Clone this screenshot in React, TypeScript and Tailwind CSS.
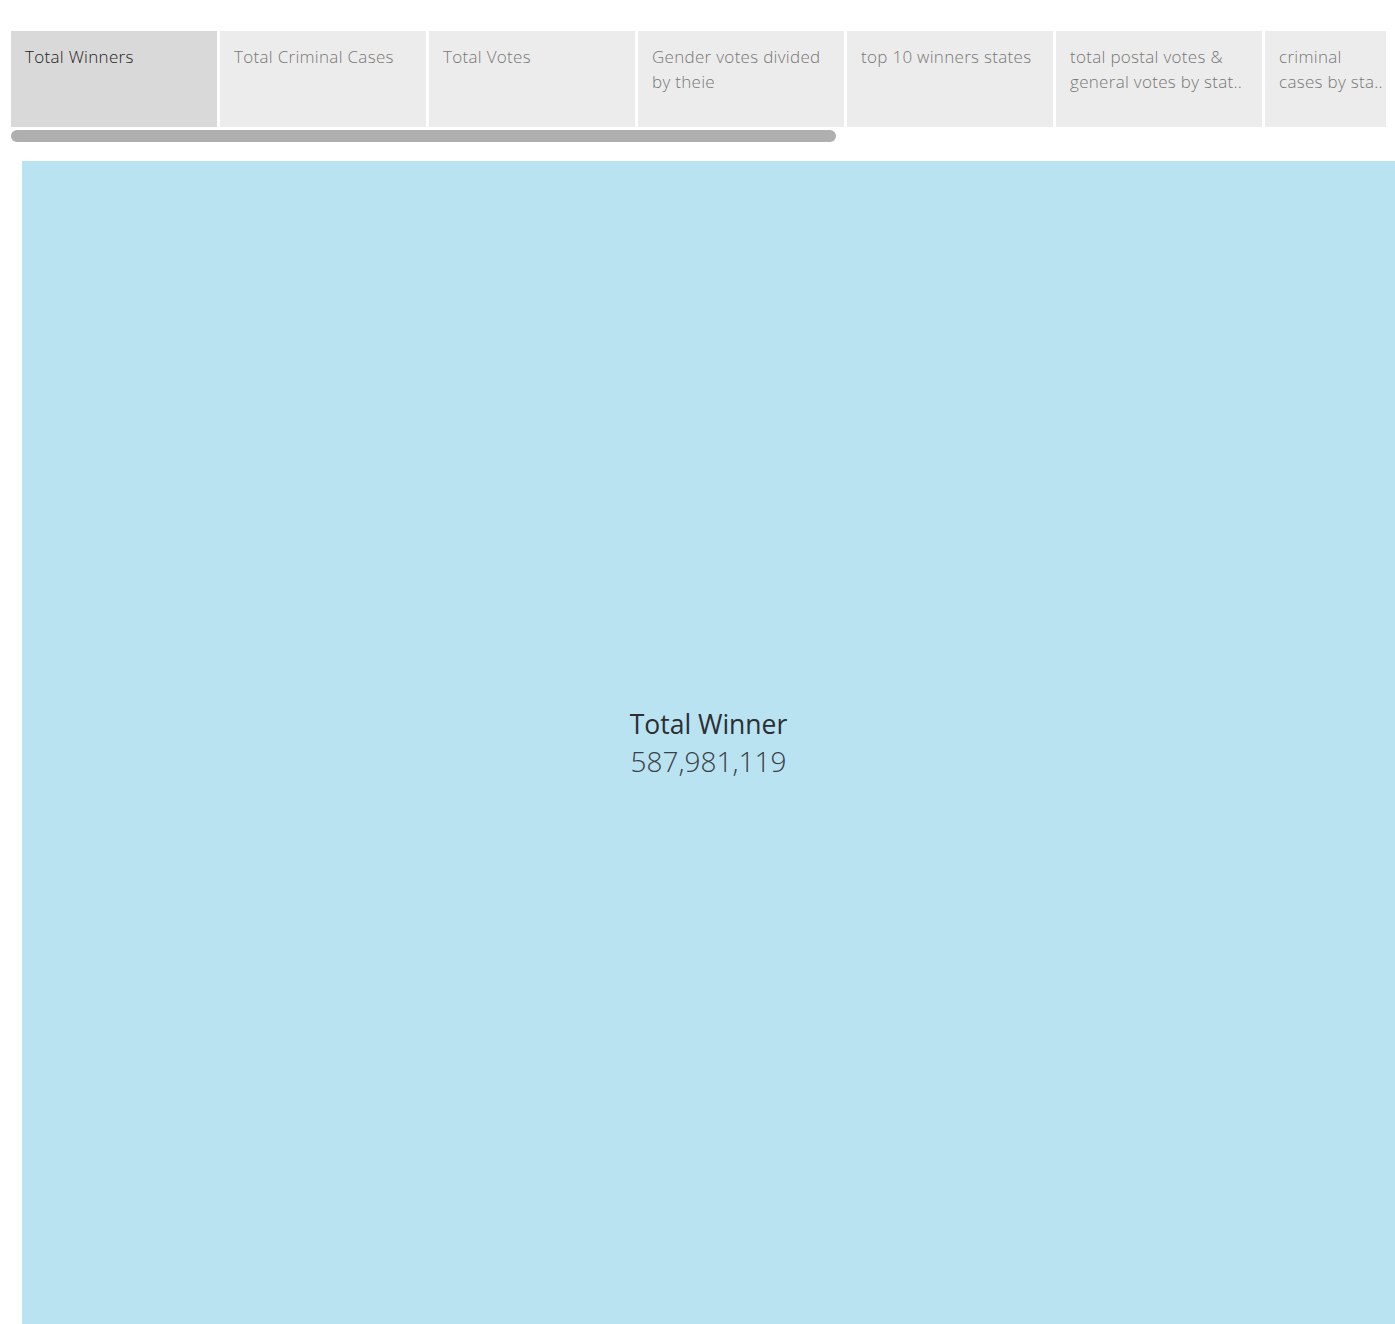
const tabs = [
  { label: "Total Winners", active: true },
  { label: "Total Criminal Cases" },
  { label: "Total Votes" },
  { label: "Gender votes divided by theie" },
  { label: "top 10 winners states" },
  { label: "total postal votes & general votes by stat.." },
  { label: "criminal cases by sta..", narrow: true },
];

export default function App() {
  return (
    <div className="flex h-[1324px] w-[1395px] flex-col overflow-hidden bg-white font-['Open_Sans',sans-serif]">
      <div className="ml-[11px] mt-[31px] w-[1375px] overflow-hidden">
        <div className="flex gap-[3px]">
          {tabs.map((t) => (
            <div
              key={t.label}
              className={
                "h-[96px] w-[206px] shrink-0 px-[14px] pt-[13px] text-[17px] font-light leading-[25px] tracking-[0.3px] " +
                (t.active ? "bg-[#d9d9d9] text-[#222]" : "bg-[#ececec] text-[#777]")
              }
            >
              <p className={t.narrow ? "w-[108px]" : "w-[178px]"}>{t.label}</p>
            </div>
          ))}
        </div>
        <div className="mt-[3px] h-[12px] w-[825px] rounded-full bg-[#afafaf]" />
      </div>
      <div className="ml-[22px] mt-[19px] flex flex-1 flex-col items-center justify-center bg-[#bae3f1] text-[#2b2f33]">
        <p className="text-[26.5px] font-medium leading-[36px]">Total Winner</p>
        <p className="text-[28px] font-light leading-[38px] text-[#3a4047]">587,981,119</p>
      </div>
    </div>
  );
}
